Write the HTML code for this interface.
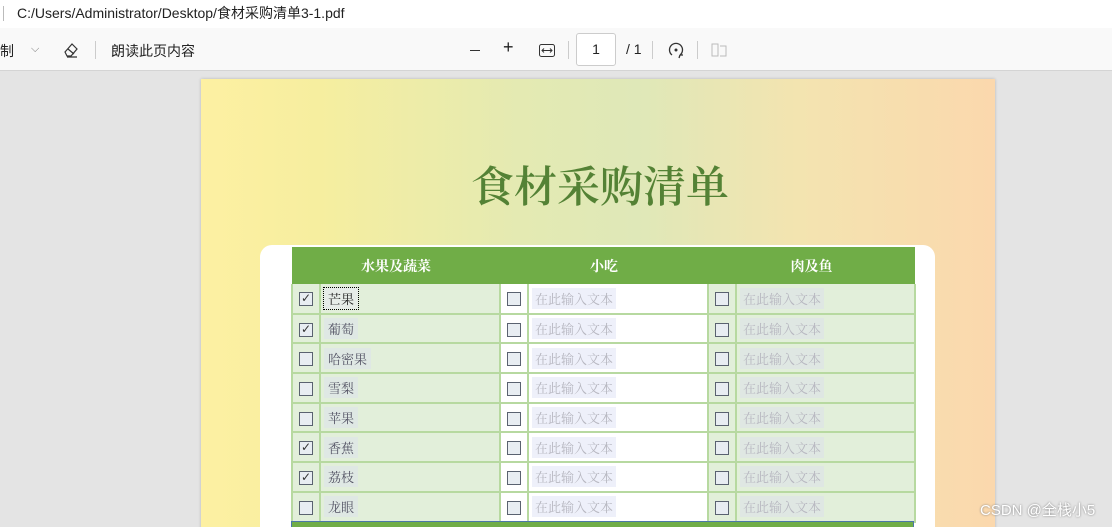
<!DOCTYPE html>
<html><head><meta charset="utf-8"><style>
*{margin:0;padding:0;box-sizing:border-box}
html,body{width:1112px;height:527px;overflow:hidden}
body{background:#e4e4e4;font-family:"Liberation Sans","Noto Sans CJK SC",sans-serif;position:relative}
.top{position:absolute;left:0;top:0;width:1112px;height:28px;background:#fff;font-size:14px;color:#222}
.top span{position:absolute;left:17px;top:3px}
.top i{position:absolute;left:3px;top:6px;width:1px;height:15px;background:#bbb}
.tb{position:absolute;left:0;top:28px;width:1112px;height:43px;background:#f9f9f9;border-bottom:1px solid #d4d4d4;font-size:14px;color:#222}
.tb .t{position:absolute;top:13px}
.sep{position:absolute;top:13px;width:1px;height:18px;background:#ccc}
.page{position:absolute;left:201px;top:79px;width:794px;height:460px;background:linear-gradient(90deg,#fdf0a2 0%,#f6ee9f 15%,#e4eab2 40%,#dfe8b8 55%,#f3e4b0 75%,#fbd8ad 100%);box-shadow:0 0 3px rgba(0,0,0,.2)}
.title{position:absolute;left:270px;top:75px;font-family:"Noto Serif CJK SC","Noto Sans CJK SC",serif;font-size:43px;font-weight:600;color:#548235}
.card{position:absolute;left:260px;top:245px;width:675px;height:300px;background:#fff;border-radius:12px}
table{position:absolute;left:291px;top:247px;border-collapse:collapse;font-family:"Liberation Serif","Noto Serif CJK SC",serif;font-size:13px}
th{background:#70ad47;color:#fff;height:37px;font-size:14px;font-weight:bold}
td{height:29.7px;border:2px solid #b7d9a0;border-top:none}
td.c{width:28px;text-align:center}
.g td{background:#e2efda}
td.w{background:#fff}
.cb{display:inline-block;width:14px;height:14px;border:1.5px solid #5a6270;background:#e8edf2;vertical-align:middle;font-size:12px;line-height:11px;text-align:center;color:#333;font-family:"DejaVu Sans",sans-serif}
.tx{display:inline-block;padding:1px 4px;margin-left:3px;color:#556;background:#dfe8e4}
.ph{display:inline-block;padding:1px 3px;margin-left:3px;color:#b7b7c0;background:#eef0fa}
.bot{position:absolute;left:291px;top:521px;width:623px;height:8px;background:#70ad47;border:1px solid #4c77a8;border-bottom:none}
.wm{position:absolute;left:980px;top:499px;color:#fff;font-size:15px;text-shadow:0 0 2px #777}
</style></head><body>
<div class="top"><i></i><span>C:/Users/Administrator/Desktop/食材采购清单3-1.pdf</span></div>
<div class="tb">
<span class="t" style="left:-14px">绘制</span><span class="t" style="left:31px;color:#777;font-size:11px;top:15px">⌵</span>
<svg style="position:absolute;left:62px;top:13px" width="18" height="18" viewBox="0 0 18 18"><path d="M3 11 L10 3 L15 8 L9 15 H5 Z M6 8 L12 13 M5 16 H15" fill="none" stroke="#333" stroke-width="1.2"/></svg>
<div class="sep" style="left:95px"></div>
<span class="t" style="left:111px">朗读此页内容</span>
<div style="position:absolute;left:470px;top:22px;width:10px;height:1px;background:#333"></div>
<span class="t" style="left:503px;top:9px;font-size:18px">+</span>
<svg style="position:absolute;left:539px;top:16px" width="16" height="13"><rect x="0.5" y="0.5" width="15" height="12" rx="2" fill="none" stroke="#333"/><path d="M3 6.5h10M5 4.5l-2 2 2 2M11 4.5l2 2-2 2" stroke="#333" fill="none"/></svg>
<div class="sep" style="left:568px"></div>
<div style="position:absolute;left:576px;top:5px;width:40px;height:33px;background:#fff;border:1px solid #ccc;border-radius:3px;text-align:center;line-height:31px">1</div>
<span class="t" style="left:626px">/ 1</span>
<div class="sep" style="left:652px"></div>
<svg style="position:absolute;left:667px;top:13px" width="18" height="18"><path d="M5 14 A6.5 6.5 0 1 1 13 14 M13 14 l-1 3 M13 14 l3 0" fill="none" stroke="#333" stroke-width="1.3"/><circle cx="9" cy="9" r="1.5" fill="#333"/></svg>
<div class="sep" style="left:697px"></div>
<svg style="position:absolute;left:711px;top:15px" width="16" height="14"><path d="M1 1h6v12H1zM9 3h6v10H9" fill="none" stroke="#bbb"/></svg>
</div>
<div class="page"><div class="title">食材采购清单</div></div>
<div class="card"></div>
<table>
<tr><th colspan="2" style="width:208px">水果及蔬菜</th><th colspan="2" style="width:208px">小吃</th><th colspan="2" style="width:207px">肉及鱼</th></tr>
<tr class="g"><td class="c"><span class="cb">✓</span></td><td><span class="tx" style="outline:1px dotted #000;color:#222;background:#e6ece8">芒果</span></td><td class="c w"><span class="cb"></span></td><td class="w"><span class="ph">在此输入文本</span></td><td class="c"><span class="cb"></span></td><td><span class="ph" style="background:#dfe7e3">在此输入文本</span></td></tr>
<tr class="g"><td class="c"><span class="cb">✓</span></td><td><span class="tx">葡萄</span></td><td class="c w"><span class="cb"></span></td><td class="w"><span class="ph">在此输入文本</span></td><td class="c"><span class="cb"></span></td><td><span class="ph" style="background:#dfe7e3">在此输入文本</span></td></tr>
<tr class="g"><td class="c"><span class="cb"></span></td><td><span class="tx">哈密果</span></td><td class="c w"><span class="cb"></span></td><td class="w"><span class="ph">在此输入文本</span></td><td class="c"><span class="cb"></span></td><td><span class="ph" style="background:#dfe7e3">在此输入文本</span></td></tr>
<tr class="g"><td class="c"><span class="cb"></span></td><td><span class="tx">雪梨</span></td><td class="c w"><span class="cb"></span></td><td class="w"><span class="ph">在此输入文本</span></td><td class="c"><span class="cb"></span></td><td><span class="ph" style="background:#dfe7e3">在此输入文本</span></td></tr>
<tr class="g"><td class="c"><span class="cb"></span></td><td><span class="tx">苹果</span></td><td class="c w"><span class="cb"></span></td><td class="w"><span class="ph">在此输入文本</span></td><td class="c"><span class="cb"></span></td><td><span class="ph" style="background:#dfe7e3">在此输入文本</span></td></tr>
<tr class="g"><td class="c"><span class="cb">✓</span></td><td><span class="tx">香蕉</span></td><td class="c w"><span class="cb"></span></td><td class="w"><span class="ph">在此输入文本</span></td><td class="c"><span class="cb"></span></td><td><span class="ph" style="background:#dfe7e3">在此输入文本</span></td></tr>
<tr class="g"><td class="c"><span class="cb">✓</span></td><td><span class="tx">荔枝</span></td><td class="c w"><span class="cb"></span></td><td class="w"><span class="ph">在此输入文本</span></td><td class="c"><span class="cb"></span></td><td><span class="ph" style="background:#dfe7e3">在此输入文本</span></td></tr>
<tr class="g"><td class="c"><span class="cb"></span></td><td><span class="tx">龙眼</span></td><td class="c w"><span class="cb"></span></td><td class="w"><span class="ph">在此输入文本</span></td><td class="c"><span class="cb"></span></td><td><span class="ph" style="background:#dfe7e3">在此输入文本</span></td></tr>
</table>
<div class="bot"></div>
<div class="wm">CSDN @全栈小5</div>
</body></html>
